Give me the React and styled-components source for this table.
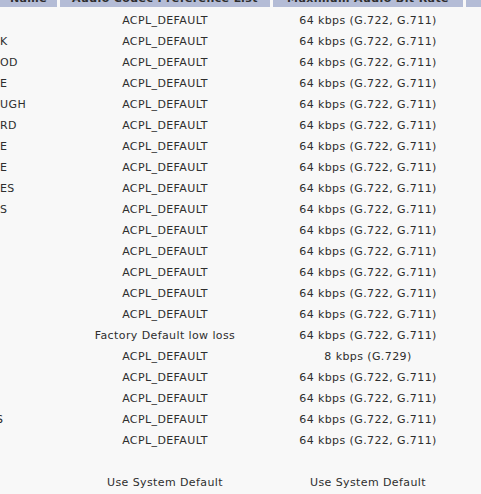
import React from "react";
import styled, { createGlobalStyle } from "styled-components";

const GlobalStyle = createGlobalStyle`
  html, body {
    margin: 0;
    padding: 0;
    background: #f8f8f8;
    overflow: hidden;
  }
`;

const Table = styled.div`
  width: 481px;
  height: 494px;
  overflow: hidden;
  font-family: "DejaVu Sans", Verdana, sans-serif;
  font-size: 11px;
  letter-spacing: 0.4px;
  color: #2e2e2e;
  background: #f8f8f8;
`;

const Row = styled.div`
  display: grid;
  grid-template-columns: 57px 210px 190px 1fr;
  column-gap: 3px;
  height: 21px;
  line-height: 21px;
`;

const HeaderRow = styled(Row)`
  height: 18px;
  line-height: 20px;
  margin-top: -11px;
  margin-bottom: 3px;
`;

const HeaderCell = styled.div`
  background: #b4bcd6;
  font-weight: bold;
  text-align: center;
  white-space: nowrap;
  overflow: hidden;
`;

const Cell = styled.div`
  text-align: ${({ left }) => (left ? "left" : "center")};
  white-space: nowrap;
  overflow: hidden;
`;

const Fragment = styled.span`
  display: inline-block;
  margin-left: ${({ cut }) => (cut ? "-4px" : "0")};
`;

const full = "64 kbps (G.722, G.711)";

const rows = [
  ["", "ACPL_DEFAULT", full],
  ["K", "ACPL_DEFAULT", full],
  ["OD", "ACPL_DEFAULT", full],
  ["E", "ACPL_DEFAULT", full],
  ["UGH", "ACPL_DEFAULT", full],
  ["RD", "ACPL_DEFAULT", full],
  ["E", "ACPL_DEFAULT", full],
  ["E", "ACPL_DEFAULT", full],
  ["ES", "ACPL_DEFAULT", full],
  ["S", "ACPL_DEFAULT", full],
  ["", "ACPL_DEFAULT", full],
  ["", "ACPL_DEFAULT", full],
  ["", "ACPL_DEFAULT", full],
  ["", "ACPL_DEFAULT", full],
  ["", "ACPL_DEFAULT", full],
  ["", "Factory Default low loss", full],
  ["", "ACPL_DEFAULT", "8 kbps (G.729)"],
  ["", "ACPL_DEFAULT", full],
  ["", "ACPL_DEFAULT", full],
  ["S", "ACPL_DEFAULT", full, true],
  ["", "ACPL_DEFAULT", full],
  ["", "", ""],
  ["", "Use System Default", "Use System Default"],
];

export default function App() {
  return (
    <>
      <GlobalStyle />
      <Table>
        <HeaderRow>
          <HeaderCell>Name</HeaderCell>
          <HeaderCell>Audio Codec Preference List</HeaderCell>
          <HeaderCell>Maximum Audio Bit Rate</HeaderCell>
          <HeaderCell />
        </HeaderRow>
        {rows.map(([name, codec, rate, cut], i) => (
          <Row key={i}>
            <Cell left>
              <Fragment cut={cut}>{name}</Fragment>
            </Cell>
            <Cell>{codec}</Cell>
            <Cell>{rate}</Cell>
            <Cell />
          </Row>
        ))}
      </Table>
    </>
  );
}
